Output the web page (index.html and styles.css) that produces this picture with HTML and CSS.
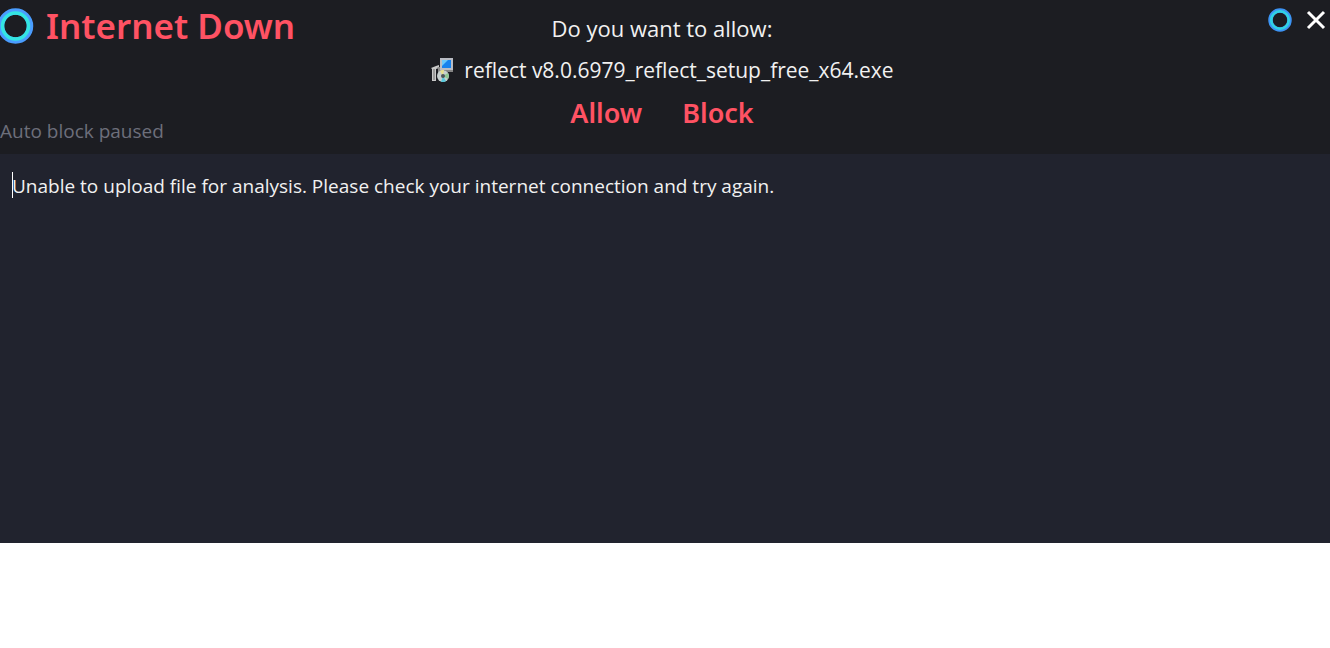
FILE: index.html
```
<!DOCTYPE html>
<html lang="en">
<head>
    <meta charset="UTF-8">
    <meta name="viewport" content="width=device-width, initial-scale=1.0">
    <title>Internet Down</title>
    <link rel="stylesheet" href="styles.css">
</head>
<body>
    <div class="dialog">
        <header class="header">
            <div class="status">
                <div class="brand">
                    <svg class="brand-logo" viewBox="0 0 34 36" aria-hidden="true">
                        <circle cx="15.500" cy="18" r="14.500" fill="none" stroke="#4a9dff" stroke-width="6.500"/>
                        <circle cx="15.500" cy="18" r="13" fill="none" stroke="#34e5e2" stroke-width="3.500"/>
                    </svg>
                    <h1 class="title">Internet Down</h1>
                </div>
                <p class="note">Auto block paused</p>
            </div>

            <div class="prompt">
                <p class="question">Do you want to allow:</p>
                <p class="file">
                    <svg class="file-icon" viewBox="0 0 24 24" aria-hidden="true">
                        <path d="M1 10l5-2 3-1v3l-3 1v12H2V11z" fill="#c9c9c9"/>
                        <path d="M4 11v11" stroke="#6b6b6b" stroke-width="1"/>
                        <path d="M7 9h5v4l-4 8V10z" fill="#8b8b8b"/>
                        <rect x="10" y="0" width="13" height="12" fill="#b9bcc4"/>
                        <rect x="12" y="2" width="9" height="8" fill="#1682ee"/>
                        <path d="M12 2h6l-6 6z" fill="#69c8fb"/>
                        <path d="M14 12h9v2h-5z" fill="#858585"/>
                        <circle cx="13" cy="18" r="6" fill="#c8d0cf"/>
                        <path d="M13 18l-3-5a6 6 0 0 1 4-1z" fill="#e8e08b"/>
                        <path d="M13 18l5-3a6 6 0 0 1 0 6z" fill="#8fc793"/>
                        <path d="M13 18l3 5a6 6 0 0 1-5 1z" fill="#58c9dc"/>
                        <circle cx="13" cy="18" r="2" fill="#4d5558"/>
                    </svg>
                    <span>reflect v8.0.6979_reflect_setup_free_x64.exe</span>
                </p>
                <div class="actions">
                    <button type="button" class="button-action">Allow</button>
                    <button type="button" class="button-action">Block</button>
                </div>
            </div>

            <div class="window-controls">
                <button type="button" class="button-icon" aria-label="Menu">
                    <svg width="24" height="24" viewBox="0 0 24 24">
                        <circle cx="12" cy="12" r="9.500" fill="none" stroke="#3c94f5" stroke-width="4.500"/>
                        <circle cx="12" cy="12" r="8.800" fill="none" stroke="#30d3e2" stroke-width="2.500"/>
                    </svg>
                </button>
                <button type="button" class="button-icon" aria-label="Close">
                    <svg width="20" height="20" viewBox="0 0 20 20">
                        <path d="M2 2l16 16M18 2L2 18" stroke="#fff" stroke-width="3"/>
                    </svg>
                </button>
            </div>
        </header>

        <div class="result">
            <span class="caret"></span>
            <textarea class="message" aria-label="Analysis result" spellcheck="false" readonly>Unable to upload file for analysis. Please check your internet connection and try again.</textarea>
        </div>
    </div>
</body>
</html>
```
FILE: styles.css
```
* {
    margin: 0;
    padding: 0;
    box-sizing: border-box;
}

body {
    font-family: 'Open Sans', 'Noto Sans', sans-serif;
    background-color: #fff;
}

.header {
    display: grid;
    grid-template-columns: 1fr auto 1fr;
    padding: 8px 4px 8px 0;
    background-color: #1c1d22;
    color: #f1f1f1;
}

.status {
    display: flex;
    flex-direction: column;
    justify-content: space-between;
}

.brand {
    display: flex;
    align-items: center;
    gap: 12px;
}

.brand-logo {
    width: 34px;
    height: 36px;
}

.title {
    color: #ff5263;
    font-family: 'Noto Sans', sans-serif;
    font-size: 35px;
    font-weight: 600;
    line-height: 36px;
}

.note {
    color: #6d6f7b;
    font-size: 19px;
    line-height: 30px;
}

.prompt {
    display: flex;
    flex-direction: column;
    align-items: center;
    padding: 0 2px 12px 0;
}

.question {
    font-size: 22px;
    line-height: 40px;
}

.file {
    display: flex;
    align-items: center;
    gap: 10px;
    font-size: 21px;
    line-height: 44px;
}

.file-icon {
    width: 24px;
    height: 24px;
}

.actions {
    display: flex;
    gap: 40px;
}

.button-action {
    background: none;
    border: none;
    color: #ff5263;
    font-family: 'Noto Sans', sans-serif;
    font-size: 27px;
    font-weight: 600;
    line-height: 42px;
    cursor: pointer;
}

.window-controls {
    display: flex;
    justify-content: flex-end;
    align-items: center;
    align-self: start;
    gap: 14px;
}

.button-icon {
    display: flex;
    background: none;
    border: none;
    cursor: pointer;
}

.result {
    position: relative;
    background-color: #21232e;
}

.message {
    display: block;
    width: 100%;
    height: 60vh;
    padding: 18px 12px;
    background: none;
    border: none;
    outline: none;
    resize: none;
    color: #f1f1f1;
    font-family: inherit;
    font-size: 19px;
    line-height: 28px;
}

/* text cursor at the start of the message */
.caret {
    position: absolute;
    top: 18px;
    left: 12px;
    width: 1px;
    height: 26px;
    background-color: #fff;
}
```
